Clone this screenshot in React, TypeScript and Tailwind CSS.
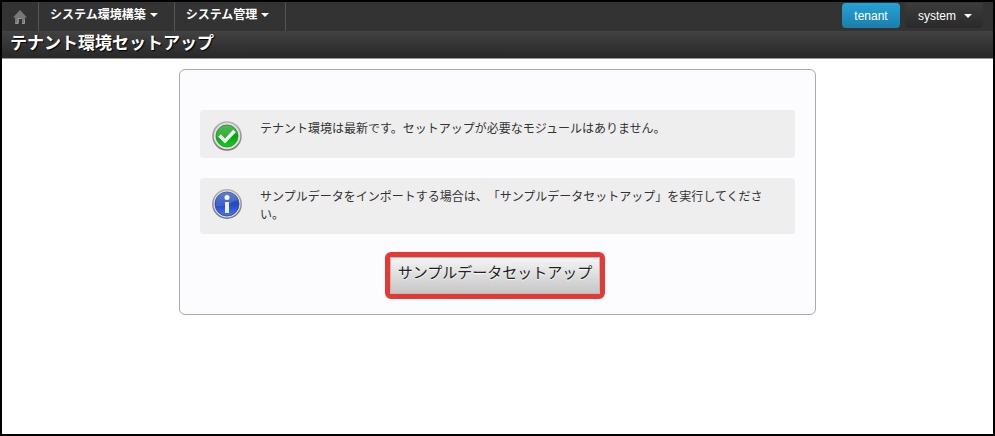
import type { ReactNode } from 'react';

interface MessageProps {
  icon: ReactNode;
  children: ReactNode;
}

const menus = ['システム環境構築', 'システム管理'];

function Caret() {
  return <svg viewBox="0 0 8 4" className="h-1 w-2 shrink-0" fill="#fff" aria-hidden="true">
    <path d="M0 0h8L4 4z" />
  </svg>;
}

function HomeIcon() {
  return <svg viewBox="0 0 14 14" className="size-3.5" aria-hidden="true">
    <path d="M7 0 14 7.5h-2V13l-2 1H9V9H6v4l-2 1H2V7.5H0z" fill="#777" />
    <path d="M2.500 13.500H5V8.500h3.500M9 13.500h2.500V10" fill="none" stroke="#999" />
  </svg>;
}

function SuccessIcon() {
  return <svg viewBox="0 0 30 30" className="size-[30px]" aria-hidden="true">
    <defs>
      <linearGradient id="okRing" x1="0" y1="0" x2="0" y2="1">
        <stop offset="0" stopColor="#b4b4b4" />
        <stop offset="1" stopColor="#77777b" />
      </linearGradient>
      <linearGradient id="okFill" x1="0" y1="0" x2="0" y2="1">
        <stop offset="0" stopColor="#35a83a" />
        <stop offset="0.5" stopColor="#07a30d" />
        <stop offset="1" stopColor="#12cf1d" />
      </linearGradient>
    </defs>
    <circle cx="15" cy="15" r="14" fill="#dedee2" stroke="url(#okRing)" strokeWidth="1.5" />
    <circle cx="15" cy="15" r="11" fill="url(#okFill)" stroke="#2c8a31" strokeWidth="0.8" />
    <path d="M4.500 14a10.500 10.500 0 0 1 20.500-2C20 12 14 18 5 17z" fill="#fff" opacity="0.16" />
    <path d="m7.500 14.500 5.500 5.500 9.500-10" fill="none" stroke="#f2f2f2" strokeWidth="3.6" />
  </svg>;
}

function InfoIcon() {
  return <svg viewBox="0 0 30 30" className="size-[30px]" aria-hidden="true">
    <defs>
      <linearGradient id="infoRing" x1="0" y1="0" x2="0" y2="1">
        <stop offset="0" stopColor="#b4b4b4" />
        <stop offset="1" stopColor="#77777b" />
      </linearGradient>
      <linearGradient id="infoFill" x1="0" y1="0" x2="0" y2="1">
        <stop offset="0" stopColor="#4468cc" />
        <stop offset="0.5" stopColor="#2149c0" />
        <stop offset="1" stopColor="#4474f6" />
      </linearGradient>
    </defs>
    <circle cx="15" cy="15" r="14.200" fill="#dcdcde" stroke="url(#infoRing)" strokeWidth="1.5" />
    <circle cx="15" cy="15" r="12" fill="url(#infoFill)" stroke="#2c489c" strokeWidth="0.8" />
    <path d="M3.500 14a11.500 11.500 0 0 1 22.500-3C21 12 14 18 4 17z" fill="#fff" opacity="0.14" />
    <circle cx="15" cy="8.500" r="2.500" fill="#fff" />
    <path d="M13 13h4v11h-4z" fill="#f0f0f0" />
  </svg>;
}

function Message({ icon, children }: MessageProps) {
  return <div className="flex min-h-12 items-start gap-[18px] rounded-[3px] bg-[#eee] pr-5 pl-3">
    <div className="shrink-0 pt-[11px]">{icon}</div>
    <p className="py-2.5 text-xs leading-[18px] text-[#333] [text-spacing-trim:space-all]">{children}</p>
  </div>;
}

export default function App() {
  return <div className="flex min-h-screen flex-col border-2 border-black bg-white font-['Liberation_Sans','Noto_Sans_CJK_JP',sans-serif]">
    <header>
      <nav className="flex h-[29px] bg-[#333] text-xs text-white">
        <a href="#home" aria-label="ホーム" className="flex w-9 items-center justify-center">
          <HomeIcon />
        </a>
        {menus.map((menu) => <button key={menu} type="button" className="flex items-center gap-1 border-l border-l-[#555] pr-4 pb-1 pl-[11px] font-bold">
          {menu}
          <Caret />
        </button>)}
        <div className="flex grow items-start justify-end gap-[5px] border-l border-l-[#555] pt-px pr-2.5">
          <button type="button" className="h-[25px] w-[58px] rounded-sm bg-linear-to-b from-[#25a3d6] to-[#1b7fab]">tenant</button>
          <button type="button" className="flex h-[25px] w-[78px] items-center gap-2 rounded-sm bg-linear-to-b from-[#3c3c3c] to-[#2a2a2a] pl-[13px]">
            system
            <Caret />
          </button>
        </div>
      </nav>
      <h1 className="h-7 border-b border-[#999] bg-linear-to-b from-[#424242] to-[#282828] px-2 text-[17px] leading-[26px] font-bold text-white [text-shadow:1px_1px_1px_#000]">テナント環境セットアップ</h1>
    </header>
    <main className="px-5 pt-2.5 pb-5">
      <section className="mx-auto flex max-w-[637px] flex-col rounded-md border border-[#aaa] bg-[#fcfcff] px-5 pt-10 pb-[15px]">
        <div className="flex flex-col gap-5">
          <Message icon={<SuccessIcon />}>テナント環境は最新です。セットアップが必要なモジュールはありません。</Message>
          <Message icon={<InfoIcon />}>サンプルデータをインポートする場合は、「サンプルデータセットアップ」を実行してください。</Message>
        </div>
        <div className="mt-[18px] flex justify-center pr-[5px]">
          <div className="rounded-md border-[5px] border-[#e53935]">
            <button type="button" className="block h-[37px] w-[210px] border border-[#bbb] bg-linear-to-b from-[#f5f5f5] to-[#c6c6c6] pb-1 text-[15px] text-[#222] [text-shadow:0_1px_1px_#fff]">サンプルデータセットアップ</button>
          </div>
        </div>
      </section>
    </main>
  </div>;
}
